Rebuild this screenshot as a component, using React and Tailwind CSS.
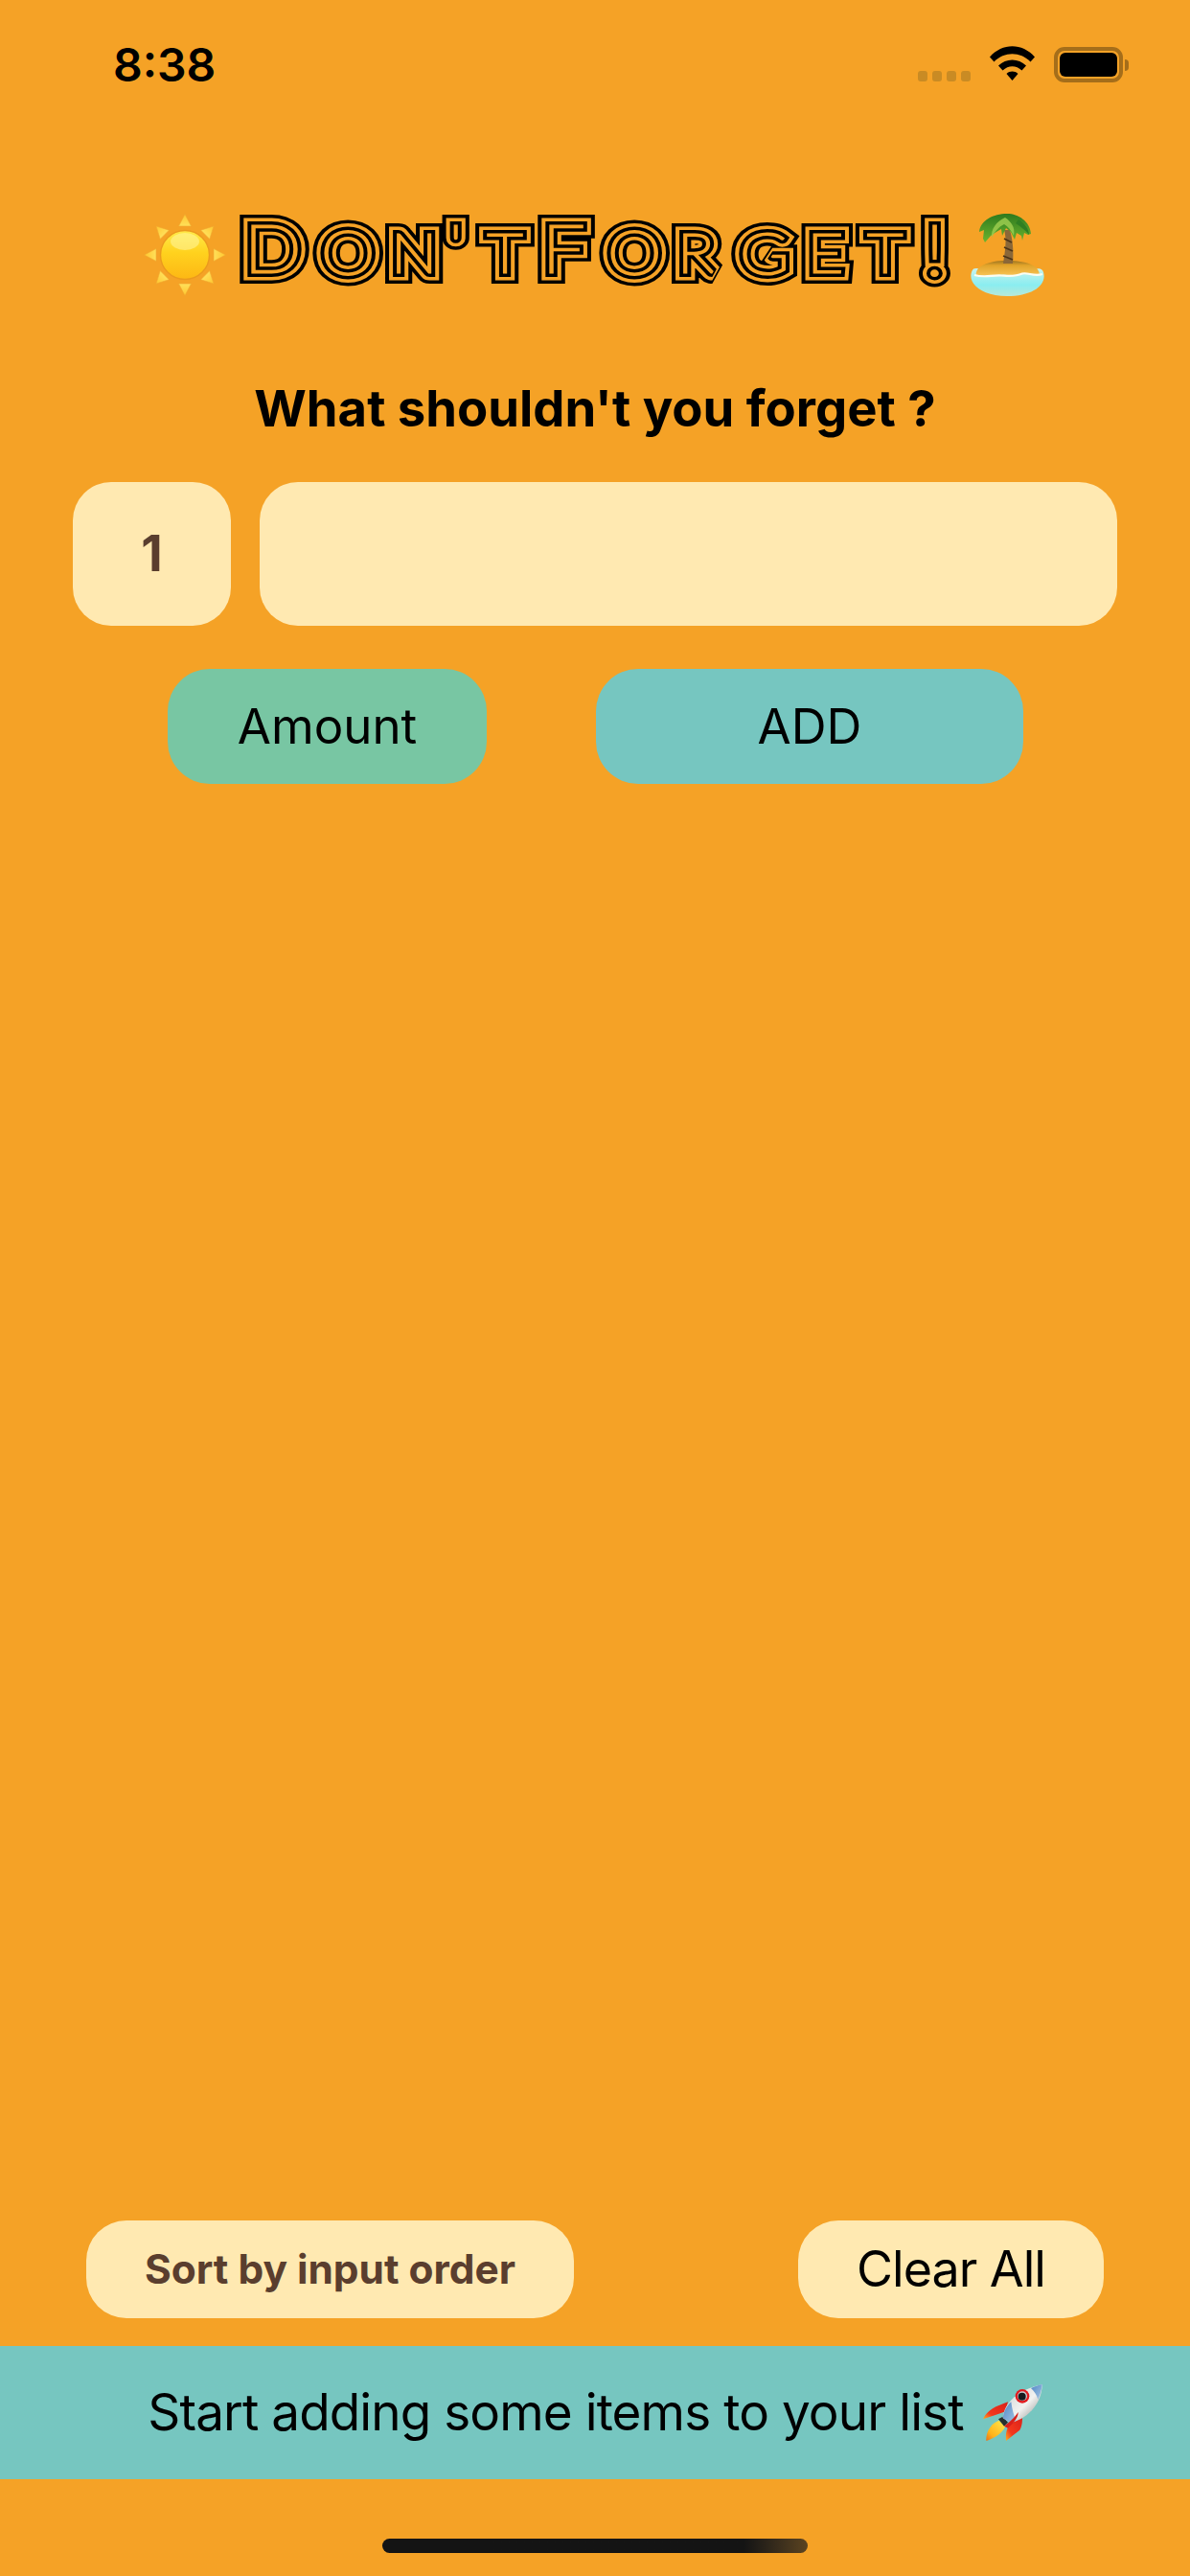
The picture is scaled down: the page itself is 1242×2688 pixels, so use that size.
const SF = "font-['Inter','Liberation_Sans',sans-serif]";

function Wifi() {
  return (
    <svg width="47" height="36" viewBox="0 0 47 36" className="mt-[-1px]">
      <path d="M0 11.5 C13 -3.5 34 -3.5 47 11.5 L42.5 16.5 C32 5.5 15 5.5 4.5 16.5 Z" fill="#000" />
      <path d="M9 20.5 C17 12.5 30 12.5 38 20.5 L33.5 25.5 C27.5 19.8 19.5 19.8 13.5 25.5 Z" fill="#000" />
      <path d="M17.5 29 C21 25.8 26 25.8 29.5 29 L23.5 36 Z" fill="#000" />
    </svg>
  );
}

function Sun() {
  const rays = [0, 45, 90, 135, 180, 225, 270, 315];
  return (
    <svg width="86" height="86" viewBox="0 0 86 86" className="shrink-0">
      <defs>
        <linearGradient id="sunBody" x1="0" y1="0" x2="0" y2="1">
          <stop offset="0" stopColor="#FFEA4A" />
          <stop offset="0.45" stopColor="#FFD21E" />
          <stop offset="1" stopColor="#FDB714" />
        </linearGradient>
        <linearGradient id="ray" x1="0" y1="0" x2="0" y2="1">
          <stop offset="0" stopColor="#FFC62E" />
          <stop offset="1" stopColor="#FFE05A" />
        </linearGradient>
      </defs>
      {rays.map((a) => (
        <path key={a} d="M43 0.5 L49.5 13 L36.5 13 Z" fill="url(#ray)" stroke="#F0A830" strokeWidth="0.6" transform={`rotate(${a} 43 43)`} />
      ))}
      <circle cx="43" cy="43" r="25.5" fill="url(#sunBody)" stroke="#EB9A1E" strokeWidth="1.4" />
      <ellipse cx="43" cy="29" rx="15" ry="9" fill="#FFF6A0" opacity="0.55" />
    </svg>
  );
}

function Island() {
  return (
    <svg width="77" height="88" viewBox="0 0 77 88" className="shrink-0">
      <defs>
        <linearGradient id="water" x1="0" y1="0" x2="0" y2="1">
          <stop offset="0" stopColor="#C9F3EE" />
          <stop offset="0.6" stopColor="#8AEDF0" />
          <stop offset="1" stopColor="#B8E8D8" />
        </linearGradient>
        <linearGradient id="sand" x1="0" y1="0" x2="0" y2="1">
          <stop offset="0" stopColor="#9C7420" />
          <stop offset="0.3" stopColor="#E2A42A" />
          <stop offset="1" stopColor="#F8C558" />
        </linearGradient>
        <linearGradient id="leaf" x1="0" y1="0" x2="0" y2="1">
          <stop offset="0" stopColor="#2E7A1E" />
          <stop offset="1" stopColor="#6DB52E" />
        </linearGradient>
      </defs>
      <path d="M1 62 C-3 74 12 87 38 87 C64 87 80 76 76 62 C74 56 68 58 60 62 L14 60 C8 58 3 56 1 62 Z" fill="url(#water)" />
      <path d="M6 66 C4 56 18 50 38 50 C58 50 72 55 72 65 C66 66 60 62 52 64 C44 67 38 64 30 65 C20 66 12 67 6 66 Z" fill="url(#sand)" />
      <path d="M4 65 C14 68 22 65 32 65.5 C40 66 46 67 54 63.5 C60 62 66 67 75 64" fill="none" stroke="#FBFDF2" strokeWidth="2.2" />
      <path d="M35 18 C38 28 36 40 34 53 L44 53 C45 40 44 28 41 18 Z" fill="#8A6738" />
      <path d="M35 27 L43 31 M35 36 L44 40 M34 45 L44 49" stroke="#4A3318" strokeWidth="1.6" />
      <path d="M38 1 C24 1 10 8 9 20 L14 18 L13 27 L15 31 L21 24 C24 22 28 19 32 17 L33 24 L37 16 L42 20 L46 28 L48 21 L53 24 L54 29 L56 21 L60 23 L63 22 C62 9 50 1 38 1 Z" fill="url(#leaf)" />
      <path d="M36 5 C42 9 47 15 45 24 C42 18 39 14 35 12 C29 15 25 20 22 26 C21 17 27 9 36 5 Z" fill="#9BCB4F" opacity="0.85" />
      <path d="M50 7 C56 11 61 17 61 23 C57 18 53 15 47 11 Z" fill="#2F7E22" />
    </svg>
  );
}

function Rocket() {
  return (
    <svg width="62" height="61" viewBox="0 0 186 183" className="shrink-0">
      <defs>
        <linearGradient id="hull" x1="0" y1="0" x2="1" y2="1">
          <stop offset="0" stopColor="#C7CDD0" />
          <stop offset="0.55" stopColor="#F2F2F0" />
          <stop offset="1" stopColor="#7D7F7E" />
        </linearGradient>
        <linearGradient id="nose" x1="0" y1="0" x2="1" y2="1">
          <stop offset="0" stopColor="#4F86C6" />
          <stop offset="1" stopColor="#A7C8E4" />
        </linearGradient>
        <linearGradient id="fire" x1="1" y1="0" x2="0" y2="1">
          <stop offset="0" stopColor="#FFEB50" />
          <stop offset="0.7" stopColor="#FFB31A" />
          <stop offset="1" stopColor="#E8701A" />
        </linearGradient>
        <linearGradient id="fin" x1="1" y1="0" x2="0" y2="1">
          <stop offset="0" stopColor="#D8201A" />
          <stop offset="0.7" stopColor="#F4381C" />
          <stop offset="1" stopColor="#FFB21E" />
        </linearGradient>
      </defs>
      <path d="M0 112 C14 82 40 72 78 58 L70 88 C50 96 24 104 0 112 Z" fill="url(#fin)" />
      <path d="M72 180 C70 150 72 130 120 92 C126 112 122 134 115 146 Z" fill="url(#fin)" />
      <path d="M10 180 C8 156 22 126 50 116 L70 134 C60 156 36 172 10 180 Z" fill="url(#fire)" />
      <path d="M48 112 L62 104 L78 122 L66 134 Z" fill="#26302F" />
      <path d="M62 108 C66 60 110 20 185 3 C184 56 150 106 86 124 Z" fill="url(#hull)" />
      <path d="M150 15 C165 9 176 5 185 3 C184 18 180 34 172 50 C168 36 160 24 150 15 Z" fill="url(#nose)" />
      <path d="M62 108 C64 90 74 70 88 58 C90 78 96 100 104 117 C96 120 92 122 86 124 Z" fill="url(#nose)" />
      <path d="M66 134 C80 122 96 112 110 90 C110 106 100 120 78 140 Z" fill="#D8201A" />
      <circle cx="123" cy="40" r="22" fill="#E21A1E" />
      <circle cx="123" cy="40" r="15" fill="#C7CDD0" />
      <circle cx="122" cy="41" r="12" fill="#17191C" />
    </svg>
  );
}

function Title() {
  const under = [
    ["#000", 24],
    ["#F5A226", 17],
    ["#000", 10],
  ];
  return (
    <svg width="750" height="90" viewBox="0 0 750 90" className="shrink-0">
      <g transform="scale(1.15 1)" strokeMiterlimit="2">
        {under.map(([c, w]) => (
          <use key={c + w} href="#titleText" fill={c} stroke={c} strokeWidth={w} />
        ))}
        <g fill="#F5A226" stroke="#F5A226" strokeWidth="3">
          <text id="titleText" className="font-['Lato','Liberation_Sans',sans-serif] font-thin uppercase">
            <tspan fontSize="68" x="5.2" y="63">D</tspan>
            <tspan fontSize="62" x="75" y="65.5">o</tspan>
            <tspan fontSize="55" x="138.7 192 226 260" y="63 54 63 63">n't </tspan>
            <tspan fontSize="68" x="275.6" y="63">F</tspan>
            <tspan fontSize="62" x="335" y="65.5">o</tspan>
            <tspan fontSize="55" x="398.7" y="63">r</tspan>
            <tspan fontSize="60" x="455" y="65">g</tspan>
            <tspan fontSize="55" x="516.5 571" y="63 63">et</tspan>
            <tspan fontSize="72" x="623" y="66">!</tspan>
          </text>
        </g>
      </g>
    </svg>
  );
}

export default function App() {
  return (
    <div className={`flex flex-col w-[1242px] h-[2688px] bg-[#F5A226] text-black ${SF}`}>
      {/* status bar */}
      <div className="flex items-start justify-between h-[220px] pt-[49px] pl-[118px] pr-[64px]">
        <div className="text-[48px] leading-[37px] font-semibold">8:38</div>
        <div className="flex items-start">
          <div className="flex gap-[5px] mt-[25px] mr-[20px]">
            <div className="w-[10px] h-[11px] rounded-[3px] bg-[#C98B24]" />
            <div className="w-[10px] h-[11px] rounded-[3px] bg-[#C98B24]" />
            <div className="w-[10px] h-[11px] rounded-[3px] bg-[#C98B24]" />
            <div className="w-[10px] h-[11px] rounded-[3px] bg-[#C98B24]" />
          </div>
          <Wifi />
          <div className="flex items-center ml-[20px]">
            <div className="w-[72px] h-[37px] rounded-[11px] border-[4px] border-[#A56E1A] p-[2px]">
              <div className="w-full h-full rounded-[6px] bg-black" />
            </div>
            <div className="w-[4px] h-[12px] ml-[2px] rounded-r-[4px] bg-[#A56E1A]" />
          </div>
        </div>
      </div>

      {/* title */}
      <div className="flex items-center h-[92px] pl-[150px]">
        <Sun />
        <div className="ml-[13px]"><Title /></div>
        <div className="ml-[14px]"><Island /></div>
      </div>

      {/* heading */}
      <div className="mt-[82px] h-[64px] text-center text-[52.6px] leading-[64px] font-bold">What shouldn't you forget ?</div>

      {/* inputs */}
      <div className="flex mt-[45px] pl-[76px] gap-[30px]">
        <div className="flex items-center justify-center w-[165px] h-[150px] rounded-[40px] bg-[#FFE9B1] text-[52px] font-bold text-[#5A3E2E]">1</div>
        <div className="w-[895px] h-[150px] rounded-[40px] bg-[#FFE9B1]" />
      </div>

      {/* actions */}
      <div className="flex mt-[45px] pl-[175px] gap-[114px]">
        <div className="flex items-center justify-center w-[333px] h-[120px] rounded-[44px] bg-[#78C6A3] text-[51px]">Amount</div>
        <div className="flex items-center justify-center w-[446px] h-[120px] rounded-[44px] bg-[#76C6C0] text-[51px]">ADD</div>
      </div>

      <div className="flex-1" />

      {/* bottom buttons */}
      <div className="flex justify-between pl-[90px] pr-[90px]">
        <div className="flex items-center justify-center w-[509px] h-[102px] rounded-[42px] bg-[#FFE9B1] text-[42.4px] font-bold text-[#5A3E2E]">Sort by input order</div>
        <div className="flex items-center justify-center w-[319px] h-[102px] rounded-[42px] bg-[#FFE9B1] text-[52px] tracking-[-1px]">Clear All</div>
      </div>

      {/* banner */}
      <div className="flex items-center justify-center gap-[20px] mt-[29px] h-[139px] bg-[#76C6C0] text-[53px] tracking-[-0.9px]">
        <span>Start adding some items to your list</span>
        <Rocket />
      </div>

      {/* home indicator */}
      <div className="flex justify-center pt-[62px] pb-[24px]">
        <div className="w-[444px] h-[15px] rounded-full bg-gradient-to-r from-[#141414] from-[85%] to-[#5C4420]" />
      </div>
    </div>
  );
}
